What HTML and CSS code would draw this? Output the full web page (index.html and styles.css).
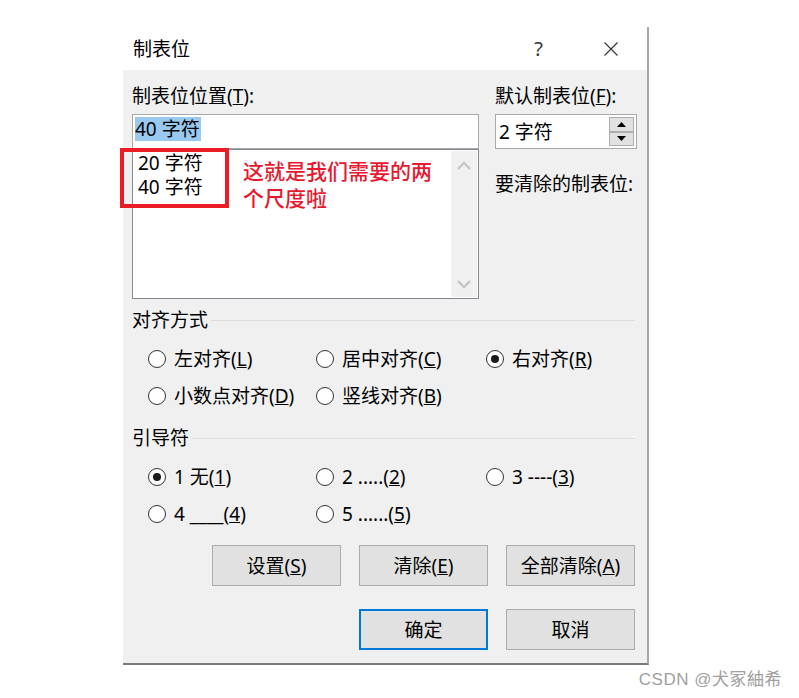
FILE: index.html
```html
<!DOCTYPE html>
<html lang="zh-CN">
<head>
<meta charset="utf-8">
<title>制表位</title>
<link rel="stylesheet" href="styles.css">
</head>
<body>
<div class="dialog">
  <div class="titlebar">
    <span class="title">制表位</span>
    <span class="help">?</span>
    <svg class="close" width="14" height="14" viewBox="0 0 14 14"><path d="M0.5 0.5L13.5 13.5M13.5 0.5L0.5 13.5" stroke="#333" stroke-width="1.1" fill="none"/></svg>
  </div>
  <div class="body">
    <div class="top">
      <div class="col">
        <div class="label">制表位位置(<u>T</u>):</div>
        <div class="textbox"><span class="sel">40 字符</span></div>
        <div class="listbox">
          <div class="items">
            <div class="item">20 字符</div>
            <div class="item">40 字符</div>
          </div>
          <div class="scrollbar">
            <svg width="14" height="9" viewBox="0 0 14 9"><path d="M1 8L7 2L13 8" stroke="#c6c6c6" stroke-width="2.4" fill="none"/></svg>
            <svg width="14" height="9" viewBox="0 0 14 9"><path d="M1 1L7 7L13 1" stroke="#c6c6c6" stroke-width="2.4" fill="none"/></svg>
          </div>
          <div class="callout-box"></div>
          <div class="callout-text">这就是我们需要的两<br>个尺度啦</div>
        </div>
      </div>
      <div class="col">
        <div class="label">默认制表位(<u>F</u>):</div>
        <div class="spinbox">
          <span class="spin-value">2 字符</span>
          <div class="spin-buttons">
            <div class="spin-btn"><svg width="9" height="5" viewBox="0 0 9 5"><path d="M4.5 0L9 5H0z" fill="#000"/></svg></div>
            <div class="spin-btn"><svg width="9" height="5" viewBox="0 0 9 5"><path d="M0 0H9L4.5 5z" fill="#000"/></svg></div>
          </div>
        </div>
        <div class="label clear-label">要清除的制表位:</div>
      </div>
    </div>

    <div class="group-head">对齐方式</div>
    <div class="radios">
      <div class="radio"><span class="dot"></span>左对齐(<u>L</u>)</div>
      <div class="radio"><span class="dot"></span>居中对齐(<u>C</u>)</div>
      <div class="radio"><span class="dot checked"></span>右对齐(<u>R</u>)</div>
      <div class="radio"><span class="dot"></span>小数点对齐(<u>D</u>)</div>
      <div class="radio"><span class="dot"></span>竖线对齐(<u>B</u>)</div>
    </div>

    <div class="group-head second">引导符</div>
    <div class="radios">
      <div class="radio"><span class="dot checked"></span>1 无(<u>1</u>)</div>
      <div class="radio"><span class="dot"></span>2 .....(<u>2</u>)</div>
      <div class="radio"><span class="dot"></span>3 ----(<u>3</u>)</div>
      <div class="radio"><span class="dot"></span>4 ____(<u>4</u>)</div>
      <div class="radio"><span class="dot"></span>5 ......(<u>5</u>)</div>
    </div>

    <div class="btn-row first">
      <div class="btn">设置(<u>S</u>)</div>
      <div class="btn">清除(<u>E</u>)</div>
      <div class="btn">全部清除(<u>A</u>)</div>
    </div>
    <div class="btn-row second">
      <div class="btn default">确定</div>
      <div class="btn">取消</div>
    </div>
  </div>
</div>
<div class="watermark">CSDN @犬冢紬希</div>
</body>
</html>
```

FILE: styles.css
```css
* { box-sizing: border-box; }

body {
  margin: 0;
  background: #fff;
  color: #000;
  font-family: "Noto Sans", "Noto Sans CJK SC", sans-serif;
}

.dialog {
  width: 526px;
  margin: 27px 0 0 123px;
  border-right: 2px solid #a6a6a6;
  border-bottom: 2px solid #7a7a7a;
}

.titlebar {
  height: 43px;
  display: flex;
  align-items: center;
  padding-left: 10px;
  background: #fff;
  font-size: 19px;
  line-height: 24px;
}

.title { flex: 1; }

.help {
  font-size: 20px;
  color: #333;
  margin-right: 61px;
}

.close { margin-right: 29px; display: block; }

.body {
  background: #f0f0f0;
  padding: 14px 12px 13px 9px;
  font-size: 19px;
  line-height: 24px;
}

.top {
  display: grid;
  grid-template-columns: 347px 142px;
  column-gap: 16px;
}

.label {
  height: 24px;
  margin-bottom: 6px;
  white-space: nowrap;
}

.textbox {
  height: 35px;
  border: 1px solid #a9a9a9;
  background: #fff;
  padding: 2px 0 0 2px;
}

.sel {
  display: inline-block;
  background: #99c9ef;
  padding-right: 1px;
}

.listbox {
  position: relative;
  height: 150px;
  border: 1px solid #828790;
  background: #fff;
  display: flex;
}

.items {
  padding: 1px 0 0 5px;
  margin-right: auto;
}

.scrollbar {
  width: 26px;
  margin: 1px 1px 1px 0;
  background: #f0f0f0;
  display: flex;
  flex-direction: column;
  justify-content: space-between;
  align-items: center;
  padding: 10px 0 8px;
}

.scrollbar svg { display: block; }

.callout-box {
  position: absolute;
  left: -13px;
  top: -2px;
  width: 109px;
  height: 60px;
  border: 4px solid #ec1c24;
}

.callout-text {
  position: absolute;
  left: 110px;
  top: 7px;
  font-family: "Noto Sans CJK SC", sans-serif;
  font-size: 21px;
  line-height: 27px;
  font-weight: 500;
  color: #e6192f;
  white-space: nowrap;
}

.spinbox {
  height: 35px;
  border: 1px solid #a9a9a9;
  background: #fff;
  display: flex;
  align-items: center;
  padding-left: 3px;
}

.spin-value { flex: 1; }

.spin-buttons {
  width: 25px;
  align-self: stretch;
  margin: 2px 2px 2px 0;
  display: flex;
  flex-direction: column;
}

.spin-btn {
  flex: 1;
  background: #e1e1e1;
  border: 1px solid #adadad;
  display: flex;
  align-items: center;
  justify-content: center;
}

.spin-btn svg { display: block; }

.clear-label { margin-top: 23px; }

.group-head {
  display: flex;
  align-items: center;
  height: 24px;
  margin-top: 9px;
}

.group-head.second { margin-top: 12px; }

.group-head::after {
  content: "";
  flex: 1;
  height: 1px;
  background: #dcdcdc;
  margin-left: 3px;
}

.radios {
  display: grid;
  grid-template-columns: 168px 170px auto;
  grid-auto-rows: 37px;
  margin: 8px 0 0 16px;
}

.radio {
  display: flex;
  align-items: center;
  white-space: nowrap;
}

.dot {
  width: 18px;
  height: 18px;
  border: 1px solid #333;
  border-radius: 50%;
  background: #fff;
  margin-right: 8px;
  display: flex;
  align-items: center;
  justify-content: center;
  flex: none;
}

.dot.checked::after {
  content: "";
  width: 8px;
  height: 8px;
  border-radius: 50%;
  background: #1a1a1a;
}

.btn-row {
  display: flex;
  justify-content: flex-end;
  gap: 18px;
}

.btn-row.first { margin-top: 13px; }
.btn-row.second { margin-top: 23px; }

.btn {
  width: 129px;
  height: 41px;
  background: #e1e1e1;
  border: 1px solid #adadad;
  display: flex;
  align-items: center;
  justify-content: center;
}

.btn.default { border: 2px solid #0078d7; }

.watermark {
  margin-top: 5px;
  padding-right: 17px;
  text-align: right;
  font-family: "Liberation Sans", "Noto Sans CJK SC", sans-serif;
  font-size: 17px;
  letter-spacing: 0.5px;
  line-height: 20px;
  color: #a0a0a0;
}
```
